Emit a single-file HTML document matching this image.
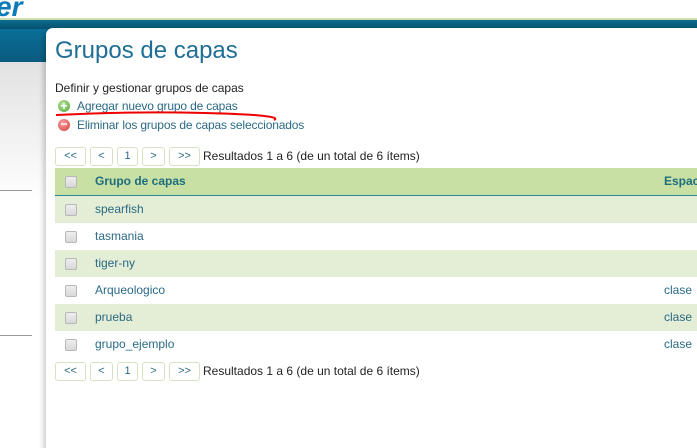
<!DOCTYPE html>
<html><head><meta charset="utf-8"><style>
body{margin:0;width:697px;height:430px;overflow:hidden;background:#fff;font-family:"Liberation Sans",sans-serif;position:relative}
.a{position:absolute}
.logo{left:-4px;top:-9px;font:italic bold 28px "Liberation Sans",sans-serif;color:#0b7ab8}
.pg{position:absolute;height:17px;border:1px solid #d6e2c4;border-radius:3px;font-size:11px;color:#2a6a85;text-align:center;line-height:17px;background:#fff}
.row{position:absolute;left:55px;width:642px;height:27px;font-size:12px;color:#2a6a85;line-height:27px}
.cb{position:absolute;left:10px;top:8px;width:10px;height:10px;border:1px solid #b8b8b8;border-radius:2px;background:linear-gradient(#eee,#d8d8d8)}
.g{background:#e4edd5}
.row .t{position:absolute;left:40px}
.row .c{position:absolute;left:609px}
</style></head><body>
<div class="a logo">er</div>
<div class="a" style="left:0;top:18px;width:697px;height:2px;background:#cfdcae"></div>
<div class="a" style="left:0;top:20px;width:697px;height:9px;background:linear-gradient(#0d6b8e,#05506e)"></div>
<div class="a" style="left:0;top:29px;width:50px;height:33px;background:linear-gradient(#0a6f98,#0a5a7e)"></div>
<div class="a" style="left:0;top:62px;width:50px;height:140px;background:linear-gradient(#e2e2e2,#fff)"></div>
<div class="a" style="left:0;top:190px;width:32px;height:1px;background:#999"></div>
<div class="a" style="left:0;top:335px;width:32px;height:1px;background:#999"></div>
<div class="a" style="left:46px;top:28px;width:660px;height:420px;background:#fff;border-radius:7px 0 0 0;box-shadow:-3px 3px 5px rgba(0,0,0,.18)"></div>
<div class="a" style="left:55px;top:37px;font-size:24px;color:#1e6e96">Grupos de capas</div>
<div class="a" style="left:55px;top:81px;font-size:12px;color:#222">Definir y gestionar grupos de capas</div>
<div class="a" style="left:58px;top:100px;width:12px;height:12px;border-radius:50%;background:radial-gradient(circle at 40% 35%,#b9e39a,#4da53a);color:#fff;font:bold 12px/12px sans-serif;text-align:center">+</div>
<div class="a" style="left:77px;top:99px;font-size:12px;color:#2a6a85;letter-spacing:-0.15px">Agregar nuevo grupo de capas</div>
<div class="a" style="left:58px;top:119px;width:12px;height:12px;border-radius:50%;background:radial-gradient(circle at 40% 35%,#f7a3a3,#d43a3a);color:#fff;font:bold 12px/11px sans-serif;text-align:center">−</div>
<div class="a" style="left:77px;top:118px;font-size:12px;color:#2a6a85;letter-spacing:-0.15px">Eliminar los grupos de capas seleccionados</div>
<svg class="a" style="left:55px;top:108px" width="222" height="14"><path d="M1 7 Q80 3 150 5 Q230 7 219 12" stroke="#e00" stroke-width="2" fill="none"/></svg>
<div class="pg" style="left:55px;top:147px;width:29px">&lt;&lt;</div>
<div class="pg" style="left:90px;top:147px;width:21px">&lt;</div>
<div class="pg" style="left:117px;top:147px;width:19px">1</div>
<div class="pg" style="left:142px;top:147px;width:21px">&gt;</div>
<div class="pg" style="left:169px;top:147px;width:29px">&gt;&gt;</div>
<div class="a" style="left:203px;top:149px;font-size:12px;color:#222">Resultados 1 a 6 (de un total de 6 ítems)</div>
<div class="row" style="top:168px;background:#c8e0a4;border-bottom:1px solid #2a8a8a;font-weight:bold;color:#1d6d7d"><div class="cb"></div><span class="t">Grupo de capas</span><span class="c">Espac</span></div>
<div class="row g" style="top:196px"><div class="cb"></div><span class="t">spearfish</span></div>
<div class="row" style="top:223px"><div class="cb"></div><span class="t">tasmania</span></div>
<div class="row g" style="top:250px"><div class="cb"></div><span class="t">tiger-ny</span></div>
<div class="row" style="top:277px"><div class="cb"></div><span class="t">Arqueologico</span><span class="c">clase</span></div>
<div class="row g" style="top:304px"><div class="cb"></div><span class="t">prueba</span><span class="c">clase</span></div>
<div class="row" style="top:331px"><div class="cb"></div><span class="t">grupo_ejemplo</span><span class="c">clase</span></div>
<div class="pg" style="left:55px;top:362px;width:29px">&lt;&lt;</div>
<div class="pg" style="left:90px;top:362px;width:21px">&lt;</div>
<div class="pg" style="left:117px;top:362px;width:19px">1</div>
<div class="pg" style="left:142px;top:362px;width:21px">&gt;</div>
<div class="pg" style="left:169px;top:362px;width:29px">&gt;&gt;</div>
<div class="a" style="left:203px;top:364px;font-size:12px;color:#222">Resultados 1 a 6 (de un total de 6 ítems)</div>
</body></html>
